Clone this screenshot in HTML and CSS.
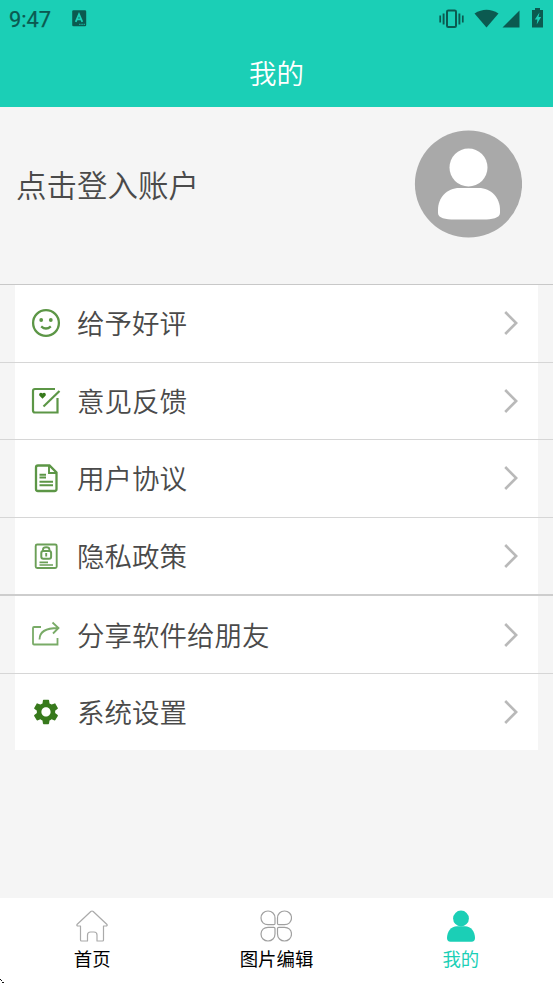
FILE: index.html
```
<!DOCTYPE html>
<html lang="zh-CN">
<head>
<meta charset="utf-8">
<title>我的</title>
<link rel="stylesheet" href="styles.css">
</head>
<body>
<div class="screen">
  <header class="top">
    <div class="status">
      <span class="time">9:47</span>
      <svg class="app-badge" width="15" height="17" viewBox="0 0 15 17"><rect x=".2" y=".3" width="14" height="16" rx="1.3" fill="#0b5a50"/><path d="M3.7 11.8 7 4.3l3.3 7.5M4.900 9.300h4.200" fill="none" stroke="#1bcfb6" stroke-width="1.800"/><path d="M7.200 14.300h1.300m.9 0h1.300m.9 0h1.300" stroke="#1bcfb6"/></svg>
      <svg class="signals" width="108" height="24" viewBox="0 0 108 24">
        <g fill="none" stroke="#0b5a50" stroke-width="2"><rect x="9" y="3.500" width="9" height="16.500" rx="1.300"/><path d="M5.600 6.500v11M21.400 6.500v11" stroke-width="1.900"/><path d="M2.200 8.500v7M24.800 8.500v7" stroke-width="1.700"/></g>
        <g fill="#0b5a50"><path d="M36.500 6.500Q48.500 -1 60.500 6.500L48.500 20.500Z"/><path d="M81.500 3.500V20.500H64.500Z"/><path d="M94 3h3V1h5v2h3v17.500H94Z"/></g>
        <path d="M101.500 5.500 96.800 12.500h2.600l-.7 5 4.400-7.500h-2.600Z" fill="#1bcfb6"/>
      </svg>
    </div>
    <h1 class="title">我的</h1>
  </header>

  <section class="account">
    <span class="login">点击登入账户</span>
    <svg class="avatar" width="108" height="108" viewBox="0 0 108 108"><circle cx="54.500" cy="54" r="53.600" fill="#a9a9a9"/><circle cx="54.500" cy="37.500" r="19" fill="#fff"/><path d="M45.500 58H64.500C77.500 58 86 68 86 80V83C86 88 77.500 89.500 69.500 89.500H40.500C31.500 89.500 24 88 24 83V80C24 68 32.500 58 45.500 58Z" fill="#fff"/></svg>
  </section>

  <main class="menu">
    <div class="row"><div class="item">
      <svg class="icon" viewBox="0 0 30 30"><g fill="none" stroke="#5c9646" stroke-width="2.300"><circle cx="15" cy="15" r="12.900"/><path d="M10.200 18.300Q15 22.800 19.800 18.300"/></g><circle cx="10.200" cy="12" r="1.900" fill="#5c9646"/><circle cx="19.800" cy="12" r="1.900" fill="#5c9646"/></svg>
      <span>给予好评</span><svg class="chevron" viewBox="0 0 14 26"><path d="m1.200 2 11 11-11 11"/></svg>
    </div></div>
    <div class="row"><div class="item">
      <svg class="icon" viewBox="0 0 30 30"><g fill="none" stroke="#5c9646" stroke-width="2.200"><path d="M24 3H4Q2 3 2 5V24.500Q2 26.500 4 26.500H26.500V12"/><path d="M12.500 20.500 28.500 5"/></g><path d="M11.500 12.800 8.300 9.500C7.500 6.500 10.500 6 11.500 7.500C12.500 6 15.500 6.500 14.700 9.500Z" fill="#37791c"/></svg>
      <span>意见反馈</span><svg class="chevron" viewBox="0 0 14 26"><path d="m1.200 2 11 11-11 11"/></svg>
    </div></div>
    <div class="row"><div class="item">
      <svg class="icon" viewBox="0 0 30 30"><g fill="none" stroke="#5c9646" stroke-width="2.300"><path d="M18.500 2.500H7Q5 2.500 5 4.500V26Q5 28 7 28H23.500Q25.500 28 25.500 26V9.500Z"/><path d="M18 2.500V10H25.500" stroke-width="1.900"/><path d="M8.500 11.800h6.500M8.500 14.500h6.500M8.500 18.700H22M8.500 22.300H22" stroke-width="1.900"/></g></svg>
      <span>用户协议</span><svg class="chevron" viewBox="0 0 14 26"><path d="m1.200 2 11 11-11 11"/></svg>
    </div></div>
    <div class="row"><div class="item">
      <svg class="icon" viewBox="0 0 30 30"><g fill="none" stroke="#6b9f57" stroke-width="1.900"><rect x="4.700" y="3.500" width="21" height="23.500" rx="1.500"/><rect x="10.300" y="10" width="9.800" height="7.800" rx="2" stroke-width="2"/><path d="M12 10V8.500Q12 6.200 15.200 6.200T18.400 8.500V10M15.200 12v3.500"/><path d="M8.500 21.300h8.500M8.500 24h13.500" stroke-width="1.700"/></g></svg>
      <span>隐私政策</span><svg class="chevron" viewBox="0 0 14 26"><path d="m1.200 2 11 11-11 11"/></svg>
    </div></div>
    <div class="row group"><div class="item">
      <svg class="icon" viewBox="0 0 30 30"><g fill="none" stroke="#79ab67" stroke-width="1.800"><path d="M10 7H3Q2 7 2 8V23.500Q2 24.500 3 24.500H26.500V18"/><path d="M8.500 19.500C8.500 12 14 8 27 8M21.500 2.500 27.500 8 22 13.500"/></g></svg>
      <span>分享软件给朋友</span><svg class="chevron" viewBox="0 0 14 26"><path d="m1.200 2 11 11-11 11"/></svg>
    </div></div>
    <div class="row"><div class="item">
      <svg class="icon" viewBox="0 0 30 30"><g transform="translate(-.3 -.4) scale(1.275)"><path fill="#37791c" d="M19.140 12.940c.04-.3.060-.61.060-.94 0-.32-.02-.64-.07-.94l2.030-1.580c.18-.14.230-.41.120-.61l-1.920-3.320c-.12-.22-.37-.29-.59-.22l-2.390.96c-.5-.38-1.030-.7-1.620-.94l-.36-2.540c-.04-.24-.24-.41-.48-.41h-3.840c-.24 0-.43.170-.47.410l-.36 2.540c-.59.240-1.130.570-1.620.940l-2.390-.96c-.22-.08-.47 0-.59.220L2.740 8.870c-.12.210-.08.470.120.610l2.030 1.580c-.05.300-.09.630-.09.940s.020.640.070.940l-2.030 1.580c-.18.140-.23.410-.12.610l1.920 3.320c.12.220.370.290.590.220l2.390-.96c.5.380 1.030.7 1.620.940l.36 2.540c.05.240.240.410.480.410h3.840c.24 0 .44-.17.470-.41l.36-2.540c.59-.24 1.130-.56 1.620-.94l2.390.96c.22.080.470 0 .59-.22l1.920-3.320c.12-.22.070-.47-.12-.61zM12 15.600c-1.980 0-3.600-1.620-3.600-3.600s1.620-3.600 3.600-3.600 3.600 1.620 3.600 3.600-1.620 3.600-3.600 3.600z"/></g></svg>
      <span>系统设置</span><svg class="chevron" viewBox="0 0 14 26"><path d="m1.200 2 11 11-11 11"/></svg>
    </div></div>
  </main>

  <nav class="tabs">
    <div class="tab"><svg width="32" height="32" viewBox="0 0 32 32" fill="none" stroke="#aaa" stroke-width="1.200"><path d="M14.800 1.500Q16 .5 17.200 1.500L31 14.500Q31.500 16 30 16H27.500V30Q27.500 31 26.500 31H21V25Q21 22 18 22H14.500Q11.500 22 11.500 25V31H5.500Q4.500 31 4.500 30V16H2Q.5 16 1 14.500Z" stroke-linejoin="round"/></svg><span>首页</span></div>
    <div class="tab"><svg width="32" height="32" viewBox="0 0 32 32" fill="none" stroke="#a0a0a0" stroke-width="1.200"><path d="M8 1C12 1 15 4 15 8V13.500Q15 14.700 13.800 14.700H8C4 14.700 1 12 1 8S4 1 8 1Z"/><path d="M24.500 1C20.500 1 17.500 4 17.500 8V13.500Q17.500 14.700 18.700 14.700H24.500C28.500 14.700 31.500 12 31.500 8S28.500 1 24.500 1Z"/><path d="M8 31C12 31 15 28 15 24V18.500Q15 17.300 13.800 17.300H8C4 17.300 1 20 1 24S4 31 8 31Z"/><path d="M24.500 31C20.500 31 17.500 28 17.500 24V18.500Q17.500 17.300 18.700 17.300H24.500C28.500 17.300 31.500 20 31.500 24S28.500 31 24.500 31Z"/></svg><span>图片编辑</span></div>
    <div class="tab active"><svg width="32" height="32" viewBox="0 0 32 32" fill="#1bcfb6"><circle cx="16" cy="8.500" r="7.900"/><path d="M12 16.300H20C26 16.300 30 22 30 28Q30 31.700 26.500 31.700H5.500Q2 31.700 2 28C2 22 6 16.300 12 16.300Z"/></svg><span>我的</span></div>
    <svg class="corner" width="4" height="4" viewBox="0 0 4 4"><path d="M0 0h1v1H0zM1 1h1v1H1zM2 3h2v1H2z" fill="#111"/></svg>
  </nav>
</div>
</body>
</html>
```
FILE: styles.css
```
* { box-sizing: border-box; }
body { margin: 0; font-family: "Noto Sans CJK SC", sans-serif; background: #f5f5f5; }
.screen { width: 553px; height: 983px; display: flex; flex-direction: column; overflow: hidden; }
.top { height: 107.400px; flex: none; background: #1bcfb6; }
.status { height: 38px; display: flex; align-items: center; padding: 0 9px; color: #0b5a50; }
.time { width: 62.500px; padding-top: 2px; font: 400 21.800px/38px Roboto, sans-serif; -webkit-text-stroke: .25px #0b5a50; }
.app-badge { display: block; margin-top: -1px; }
.signals { display: block; margin: 0 -2px 0 auto; }
.title { margin: -1px 0 0; color: #fff; font-size: 27.500px; font-weight: 350; line-height: 70px; text-align: center; }
.account { height: 176.600px; flex: none; display: flex; align-items: flex-start; justify-content: space-between; padding: 22.600px 31px 0 16px; }
.login { font-size: 30.500px; font-weight: 350; line-height: 108px; color: #4a4a4a; }
.avatar { display: block; }
.menu { flex: 1; }
.row { height: 77.600px; padding: 0 15px; border-top: 1px solid #d6d6d6; }
.row:first-child { border-color: #c8c8c8; }
.row.group { height: 78.400px; border-top: 2px solid #cdcdcd; }
.item { height: 100%; display: flex; align-items: center; padding: 0 20.500px 0 16px; background: #fff; color: #4a4a4a; font-size: 27.500px; font-weight: 350; line-height: 40px; }
.item span { padding-bottom: 2px; }
.icon { width: 30px; height: 30px; margin-right: 16px; }
.chevron { width: 14px; height: 26px; margin-left: auto; fill: none; stroke: #b9b9b9; stroke-width: 2.600; }
.tabs { position: relative; height: 84.600px; flex: none; display: flex; background: #fff; color: #000; }
.tab { flex: 1; display: flex; flex-direction: column; align-items: center; padding-top: 12px; font-size: 18.400px; line-height: 27px; }
.tab svg { display: block; margin-bottom: 3px; }
.active { color: #1bcfb6; }
.corner { position: absolute; left: 0; bottom: 0; }
```
